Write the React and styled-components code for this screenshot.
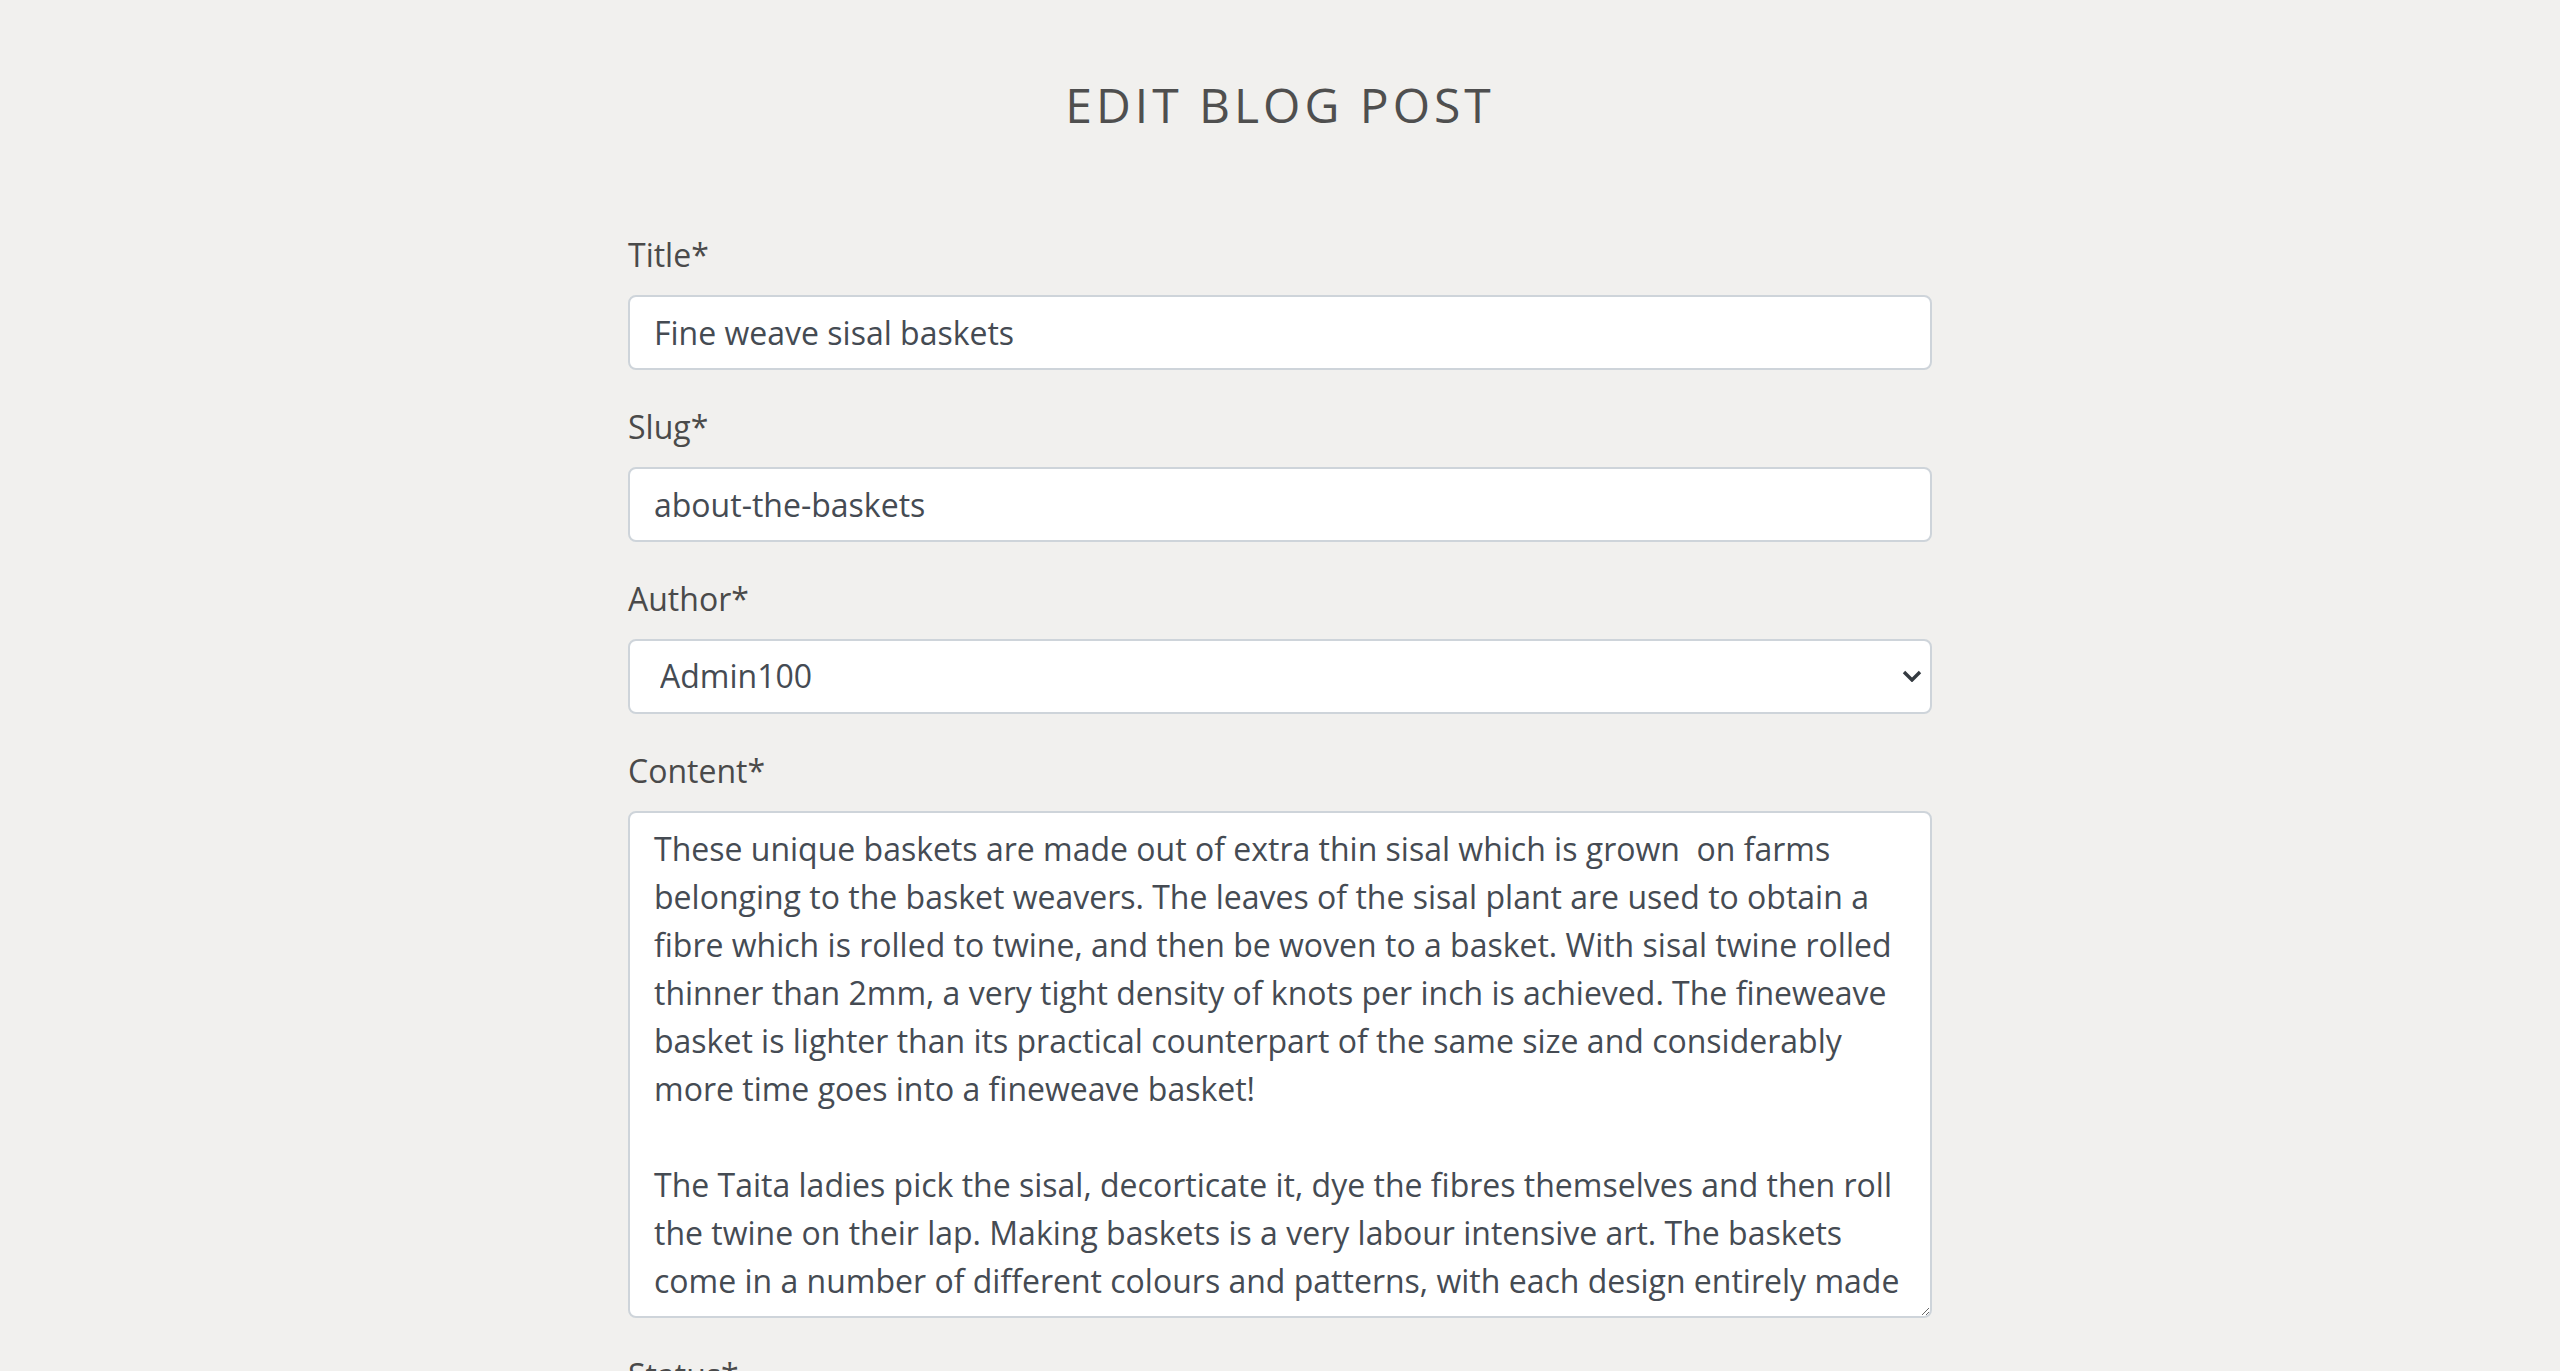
import React from "react";
import styled, { createGlobalStyle } from "styled-components";

const GlobalStyle = createGlobalStyle`
  html {
    scrollbar-width: none;
  }
  body {
    margin: 0;
    background: #f1f0ee;
    font-family: "Open Sans", "Liberation Sans", sans-serif;
    color: #555;
  }
`;

const Page = styled.div`
  padding: 76px 0 80px;
`;

const Heading = styled.h1`
  margin: 0 0 97px;
  text-align: center;
  font-size: 48px;
  font-weight: 400;
  line-height: 1.2;
  letter-spacing: 4px;
  text-transform: uppercase;
  color: #4f4f4f;
`;

const Form = styled.form`
  width: 1304px;
  margin: 0 auto;
`;

const FormGroup = styled.div`
  margin-bottom: 33px;
`;

const Label = styled.label`
  display: block;
  margin-bottom: 16px;
  font-size: 32px;
  line-height: 48px;
  color: #4a4a4a;
`;

const fieldBase = `
  display: block;
  width: 100%;
  box-sizing: border-box;
  border: 2px solid #ced4da;
  border-radius: 8px;
  background: #fff;
  font-family: "Open Sans", "Liberation Sans", sans-serif;
  font-size: 32px;
  line-height: 48px;
  color: #454b53;
  outline: none;
`;

const Input = styled.input`
  ${fieldBase}
  height: 75px;
  padding: 12px 24px;
`;

const SelectWrap = styled.div`
  position: relative;
`;

const Select = styled.select`
  ${fieldBase}
  height: 75px;
  padding: 0 60px 0 30px;
  appearance: none;
  -webkit-appearance: none;
`;

const Chevron = styled.svg`
  position: absolute;
  right: 10px;
  top: 50%;
  width: 20px;
  height: 12px;
  margin-top: -6px;
  pointer-events: none;
`;

const TextArea = styled.textarea`
  ${fieldBase}
  height: 507px;
  padding: 12px 24px;
  resize: vertical;
  overflow: hidden;
`;

const content = `These unique baskets are made out of extra thin sisal which is grown  on farms belonging to the basket weavers. The leaves of the sisal plant are used to obtain a fibre which is rolled to twine, and then be woven to a basket. With sisal twine rolled thinner than 2mm, a very tight density of knots per inch is achieved. The fineweave basket is lighter than its practical counterpart of the same size and considerably more time goes into a fineweave basket!

The Taita ladies pick the sisal, decorticate it, dye the fibres themselves and then roll the twine on their lap. Making baskets is a very labour intensive art. The baskets come in a number of different colours and patterns, with each design entirely made on the basket weavers own initiative.`;

function App() {
  return (
    <Page>
      <GlobalStyle />
      <Heading>Edit Blog Post</Heading>
      <Form onSubmit={(e) => e.preventDefault()}>
        <FormGroup>
          <Label htmlFor="title">Title*</Label>
          <Input id="title" type="text" defaultValue="Fine weave sisal baskets" />
        </FormGroup>

        <FormGroup>
          <Label htmlFor="slug">Slug*</Label>
          <Input id="slug" type="text" defaultValue="about-the-baskets" />
        </FormGroup>

        <FormGroup>
          <Label htmlFor="author">Author*</Label>
          <SelectWrap>
            <Select id="author" defaultValue="1">
              <option value="1">Admin100</option>
            </Select>
            <Chevron viewBox="0 0 20 12">
              <path d="M2 2l8 8 8-8" fill="none" stroke="#343a40" strokeWidth="3.4" />
            </Chevron>
          </SelectWrap>
        </FormGroup>

        <FormGroup>
          <Label htmlFor="content">Content*</Label>
          <TextArea id="content" rows={10} defaultValue={content} />
        </FormGroup>

        <FormGroup>
          <Label htmlFor="status">Status*</Label>
          <SelectWrap>
            <Select id="status" defaultValue="1">
              <option value="0">Draft</option>
              <option value="1">Published</option>
            </Select>
          </SelectWrap>
        </FormGroup>
      </Form>
    </Page>
  );
}

export default App;
